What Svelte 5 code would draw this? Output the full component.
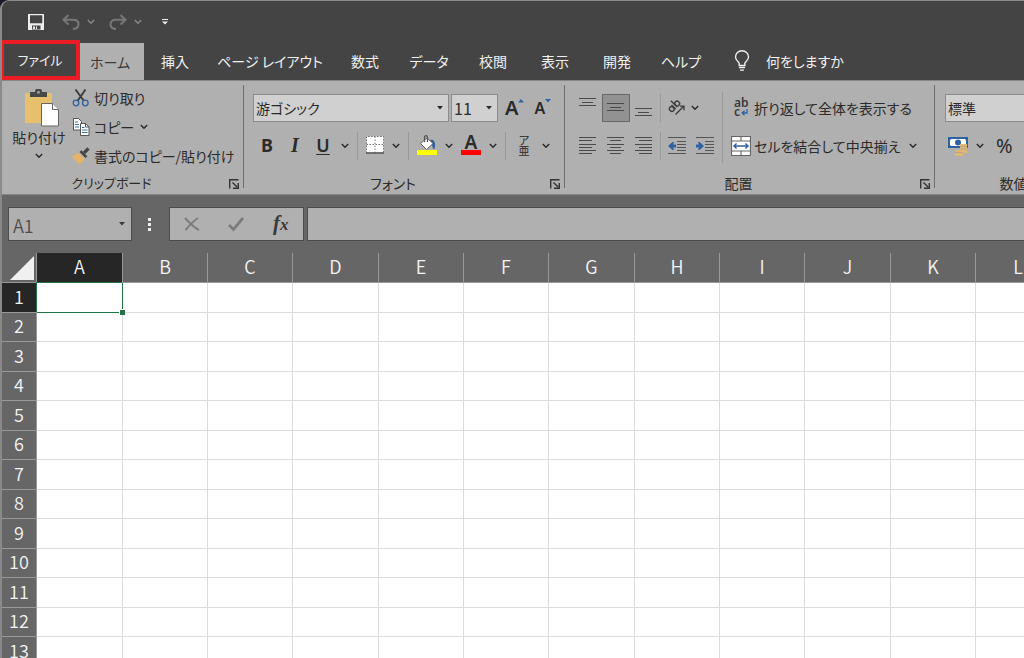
<script>
  const tabs = [
    { label: '挿入' },
    { label: 'ページ レイアウト', size: 'wide' },
    { label: '数式' },
    { label: 'データ', size: 'mid' },
    { label: '校閲' },
    { label: '表示' },
    { label: '開発' },
    { label: 'ヘルプ', size: 'mid' },
  ];
  const columns = 'ABCDEFGHIJKL'.split('');
  const rows = Array.from({ length: 13 }, (_, i) => i + 1);

  let active = $state({ column: 'A', row: 1 });
  let formula = $state('');
</script>

{#snippet chevron()}
  <svg class="chevron" viewBox="0 0 8 6" width="8" height="6" aria-hidden="true">
    <path d="M.8 1 4 4.200 7.200 1" fill="none" stroke="currentColor" stroke-width="1.500" />
  </svg>
{/snippet}

{#snippet caret()}
  <svg class="caret" viewBox="0 0 6 4" width="6" height="4" aria-hidden="true">
    <path d="M0 0h6L3 3.6z" fill="currentColor" />
  </svg>
{/snippet}

{#snippet launcher(label)}
  <button class="launcher" aria-label={label}>
    <svg viewBox="0 0 10 10" width="10" height="10" aria-hidden="true">
      <path d="M.7 9.5V.7H9.5M3.5 3.5l4.6 4.6M9.3 4v5.3H4" fill="none" stroke="#333" stroke-width="1.4" />
    </svg>
  </button>
{/snippet}

{#snippet lines(list)}
  <svg viewBox="0 0 18 20" width="18" height="20" aria-hidden="true">
    {#each list as [x, y, w]}
      <rect {x} {y} width={w} height="1" fill="#4a4a4a" />
    {/each}
  </svg>
{/snippet}

<div class="window">
  <header class="title">
    <button aria-label="上書き保存">
      <svg viewBox="0 0 16 16" width="16" height="16" aria-hidden="true">
        <path d="M0 0h16v16H0z" fill="#eee" />
        <path d="M2 1.300h12.300v7.900H2zM4 11.500h8.500v4H4z" fill="#444" />
        <path d="M5 12.500h2v2.500H5zM8 12.500h1v2.500H8z" fill="#eee" />
      </svg>
    </button>
    <button class="dim undo" aria-label="元に戻す">
      <svg viewBox="0 0 18 16" width="18" height="16" aria-hidden="true">
        <path d="M6.5 1 1.5 5.8l5 4.6M1.8 5.8H11c3.500 0 5.500 1.800 5.500 4.400 0 2.800-2.200 4.700-5.500 4.700" fill="none" stroke="currentColor" stroke-width="2.100" />
      </svg>
      {@render chevron()}
    </button>
    <button class="dim redo" aria-label="やり直し">
      <svg viewBox="0 0 18 16" width="18" height="16" aria-hidden="true">
        <path d="M11.500 1l5 4.800-5 4.600M16.200 5.800H7C3.500 5.800 1.500 7.600 1.500 10.200c0 2.800 2.200 4.700 5.500 4.700" fill="none" stroke="currentColor" stroke-width="2.100" />
      </svg>
      {@render chevron()}
    </button>
    <button class="customize" aria-label="クイック アクセス ツール バーのカスタマイズ">
      <svg viewBox="0 0 6 6" width="6" height="6" aria-hidden="true">
        <path d="M0 0h6v1H0zM0 2.400h6L3 5.600z" fill="#eee" />
      </svg>
    </button>
  </header>

  <nav class="tabs">
    <button class="tab file">ファイル</button>
    <button class="tab home">ホーム</button>
    {#each tabs as tab}
      <button class="tab {tab.size ?? ''}">{tab.label}</button>
    {/each}
    <button class="tab tell">
      <svg viewBox="0 0 16 22" width="16" height="22" aria-hidden="true">
        <path d="M5.200 15.500v-2.300C4.800 11.500 1.500 10.500 1.500 7a6.500 6.200 0 0 1 13 0c0 3.500-3.300 4.500-3.700 6.200v2.300z" fill="none" stroke="#eee" stroke-width="1.400" />
        <path d="M5 17.500h6M6 20.200h4" stroke="#eee" stroke-width="1.300" />
      </svg>
      何をしますか
    </button>
  </nav>

  <div class="ribbon">
    <section class="group clipboard" aria-label="クリップボード">
      <div class="body">
        <button class="paste">
          <svg viewBox="0 0 36 38" width="36" height="38" aria-hidden="true">
            <path d="M1 4h27v30H1z" fill="#e6c06c" />
            <path d="M6 3h5V2a2 2 0 0 1 2-2h3a2 2 0 0 1 2 2v1h5v5H6z" fill="#484848" />
            <path d="M13.300 2.200h2.400v2.200h-2.400z" fill="#b0b0b0" />
            <path d="M17.500 14.500h11l6 6v16.500h-17z" fill="#fff" stroke="#666" />
            <path d="M28.500 14.500v6h6" fill="#fff" stroke="#666" />
          </svg>
          <span>貼り付け</span>
          {@render chevron()}
        </button>
        <div class="small">
          <button>
            <svg viewBox="0 0 18 18" width="18" height="18" aria-hidden="true">
              <path d="M3.500.5 12 12M13.500.5 5.500 12" stroke="#3c3c3c" stroke-width="1.900" />
              <circle cx="4" cy="14" r="2.800" fill="none" stroke="#2f62a0" stroke-width="1.300" />
              <circle cx="13.300" cy="14" r="2.800" fill="none" stroke="#2f62a0" stroke-width="1.300" />
            </svg>
            切り取り
          </button>
          <button>
            <svg viewBox="0 0 18 18" width="18" height="18" aria-hidden="true">
              <path d="M1.500.5h5l3 3v8.500h-8z" fill="#fff" stroke="#555" />
              <path d="M3 4h3M3 6.500h4M3 9h4" stroke="#3c6ea8" />
              <path d="M8.500 5.500h5l3.500 3.500v8.500H8.500z" fill="#fff" stroke="#555" />
              <path d="M13.500 5.500V9H17" fill="none" stroke="#555" />
              <path d="M10 9.500h2.500M10 12h5.500M10 14.500h5.500" stroke="#3c6ea8" />
            </svg>
            コピー
            {@render chevron()}
          </button>
          <button>
            <svg viewBox="0 0 18 18" width="18" height="18" aria-hidden="true">
              <path d="M0 9.500 6.500 6l6 6L8 17.500 6 16z" fill="#e6b467" />
              <path d="m7.500 5 1.800-1.800 6 6-1.800 1.800z" fill="#444" />
              <path d="m12 5.800 4.500-4.300" stroke="#444" stroke-width="3.200" />
            </svg>
            書式のコピー/貼り付け
          </button>
        </div>
      </div>
      <footer><span>クリップボード</span>{@render launcher('クリップボードの詳細')}</footer>
    </section>

    <section class="group font" aria-label="フォント">
      <div class="body stack">
        <div class="line">
          <label class="pick face">
            <select aria-label="フォント名"><option>游ゴシック</option></select>
            {@render caret()}
          </label>
          <label class="pick size">
            <select aria-label="フォント サイズ"><option>11</option></select>
            {@render caret()}
          </label>
          <button class="grow big" aria-label="フォント サイズの拡大">
            <b>A</b>
            <svg viewBox="0 0 6 4" width="6" height="4" aria-hidden="true"><path d="M0 3.500 3 0l3 3.500z" fill="#2f62a0" /></svg>
          </button>
          <button class="grow" aria-label="フォント サイズの縮小">
            <b>A</b>
            <svg viewBox="0 0 6 4" width="6" height="4" aria-hidden="true"><path d="M0 0h6L3 3.500z" fill="#2f62a0" /></svg>
          </button>
        </div>
        <div class="line tools">
          <button class="letter bold" aria-label="太字">B</button>
          <button class="letter italic" aria-label="斜体">I</button>
          <button class="letter under" aria-label="下線">U</button>
          <button class="drop" aria-label="下線の種類">{@render chevron()}</button>
          <i class="rule"></i>
          <button class="tool border" aria-label="罫線">
            <svg viewBox="0 0 18 18" width="18" height="18" aria-hidden="true">
              <path d="M.5.500h17v16H.500z" fill="#fff" />
              <path d="M.5 17V.500h17V17M9 .500V17M.500 8.500h17" fill="none" stroke="#777" stroke-dasharray="1.500 1.500" />
              <path d="M0 17h18" stroke="#555" stroke-width="1.400" />
            </svg>
          </button>
          <button class="drop" aria-label="罫線の種類">{@render chevron()}</button>
          <i class="rule"></i>
          <button class="tool" aria-label="塗りつぶしの色">
            <svg viewBox="0 0 20 20" width="20" height="20" aria-hidden="true">
              <path d="M13 4.500c4.500 0 6 3 4.500 9.500-2.500-.500-2-4-3-6z" fill="#2f62a0" />
              <path d="M3.500 8.500 10 3l6 5.500-6.500 6z" fill="#fff" stroke="#666" />
              <path d="M7.500 7V2.500c0-2.500 3-2.500 3 0V7" fill="none" stroke="#555" stroke-width="1.300" />
              <path d="M0 15h20v5H0z" fill="#ff0" />
            </svg>
          </button>
          <button class="drop" aria-label="塗りつぶしの色の一覧">{@render chevron()}</button>
          <button class="tool color" aria-label="フォントの色">
            <b>A</b><span></span>
          </button>
          <button class="drop" aria-label="フォントの色の一覧">{@render chevron()}</button>
          <i class="rule"></i>
          <button class="tool ruby" aria-label="ふりがなの表示"><span>ア</span><span>亜</span></button>
          <button class="drop" aria-label="ふりがなの設定">{@render chevron()}</button>
        </div>
      </div>
      <footer><span>フォント</span>{@render launcher('フォントの設定')}</footer>
    </section>

    <section class="group align" aria-label="配置">
      <div class="body split">
        <div class="stack">
          <div class="line">
            <button class="cell" aria-label="上揃え">{@render lines([[0, 0, 17], [3, 4, 11], [0, 7, 17]])}</button>
            <button class="cell on" aria-label="上下中央揃え">{@render lines([[0, 5, 17], [3, 9, 11], [0, 12, 17]])}</button>
            <button class="cell" aria-label="下揃え">{@render lines([[0, 10, 17], [3, 14, 11], [0, 17, 17]])}</button>
            <i class="rule"></i>
            <button class="turn" aria-label="方向">
              <svg viewBox="0 0 18 18" width="18" height="18" aria-hidden="true">
                <g fill="none" stroke="#3a3a3a" stroke-width="1.300">
                  <g transform="rotate(-45 6 7)">
                    <ellipse cx="2.300" cy="7.500" rx="2.200" ry="2.500" />
                    <path d="M5 4.500v5.800M7.500 1v9" />
                    <ellipse cx="10" cy="7.500" rx="2.300" ry="2.500" />
                  </g>
                  <path d="M7.500 15.500 15.500 7.500M12 7.200h4v4" />
                </g>
              </svg>
              {@render chevron()}
            </button>
          </div>
          <div class="line">
            <button class="cell" aria-label="左揃え">{@render lines([[0, 1, 17], [0, 4, 13], [0, 8, 17], [0, 11, 13], [0, 14, 17], [0, 17, 13]])}</button>
            <button class="cell" aria-label="中央揃え">{@render lines([[0, 1, 17], [3, 4, 11], [0, 8, 17], [3, 11, 11], [0, 14, 17], [3, 17, 11]])}</button>
            <button class="cell" aria-label="右揃え">{@render lines([[0, 1, 17], [4, 4, 13], [0, 8, 17], [4, 11, 13], [0, 14, 17], [4, 17, 13]])}</button>
            <i class="rule"></i>
            <button class="cell" aria-label="インデントを減らす">
              <svg viewBox="0 0 18 20" width="18" height="20" aria-hidden="true">
                <path d="M0 1.500h18M9 5.500h9M9 8.500h9M9 11.500h9M9 14.500h9M0 17.500h18" stroke="#555" />
                <path d="M0 10l4.500-4h1.500L5.200 8.600H8v2.800H5.200l.8 2.600H4.500z" fill="#2f62a0" />
              </svg>
            </button>
            <button class="cell" aria-label="インデントを増やす">
              <svg viewBox="0 0 18 20" width="18" height="20" aria-hidden="true">
                <path d="M0 1.500h18M9 5.500h9M9 8.500h9M9 11.500h9M9 14.500h9M0 17.500h18" stroke="#555" />
                <path d="M8 10 3.500 6H2l.8 2.600H0v2.800h2.800L2 14h1.500z" fill="#2f62a0" />
              </svg>
            </button>
          </div>
        </div>
        <i class="rule tall"></i>
        <div class="stack wrap">
          <div class="line">
            <button class="text">
              <svg viewBox="0 0 20 20" width="20" height="20" aria-hidden="true">
                <text x="3" y="9" font-size="12" font-weight="600" fill="#3a3a3a">ab</text>
                <text x="3" y="18" font-size="12" font-weight="600" fill="#3a3a3a">c</text>
                <path d="M16 11v4H11.500M13.500 12.800 11.200 15l2.300 2.200" fill="none" stroke="#2f62a0" stroke-width="1.300" />
              </svg>
              折り返して全体を表示する
            </button>
          </div>
          <div class="line">
            <button class="text">
              <svg viewBox="0 0 18 18" width="20" height="20" aria-hidden="true">
                <path d="M.5.500h17v17H.500z" fill="#fff" stroke="#666" />
                <path d="M.5 4.500h17M.500 13.500h17M9 .500v4M9 13.500v4" stroke="#666" />
                <path d="M3 9h12M5 6.800 2.700 9 5 11.200M13 6.800 15.300 9 13 11.200" fill="none" stroke="#2f62a0" stroke-width="1.300" />
              </svg>
              セルを結合して中央揃え
              {@render chevron()}
            </button>
          </div>
        </div>
      </div>
      <footer><span>配置</span>{@render launcher('配置の設定')}</footer>
    </section>

    <section class="group number" aria-label="数値">
      <div class="body stack">
        <div class="line">
          <label class="pick format"><select aria-label="表示形式"><option>標準</option></select></label>
        </div>
        <div class="line money">
          <button class="turn" aria-label="通貨表示形式">
            <svg viewBox="0 0 20 20" width="20" height="20" aria-hidden="true">
              <path d="M0 1h20v11H0z" fill="#2f62a0" />
              <path d="M3 3h14l1 1.500v4L17 10H3L2 8.500v-4z" fill="#fff" />
              <circle cx="10" cy="6.500" r="3" fill="#2f62a0" />
              <path d="M12 8h7v9h-4v3H7v-6h5z" fill="#e0b878" />
              <path d="M12 10.500h7M12 13h7M7 16.500h8" stroke="#b9a382" />
            </svg>
            {@render chevron()}
          </button>
          <button class="percent" aria-label="パーセント スタイル">%</button>
        </div>
      </div>
      <footer><span>数値</span></footer>
    </section>
  </div>

  <div class="formula">
    <label class="name">
      <input aria-label="名前ボックス" value={active.column + active.row} readonly />
      {@render caret()}
    </label>
    <svg class="dots" viewBox="0 0 3 13" width="3" height="13" aria-hidden="true">
      <path d="M0 0h3v3H0zM0 5h3v3H0zM0 10h3v3H0z" fill="#eee" />
    </svg>
    <div class="edit">
      <button aria-label="キャンセル">
        <svg viewBox="0 0 16 14" width="16" height="14" aria-hidden="true"><path d="M1 1c4 4 8 9 14 12M14 1C9 4 5 9 1.500 13" fill="none" stroke="#7c7c7c" stroke-width="2" /></svg>
      </button>
      <button aria-label="入力">
        <svg viewBox="0 0 16 14" width="16" height="14" aria-hidden="true"><path d="M1 8l4.500 4.500L15 1" fill="none" stroke="#7c7c7c" stroke-width="2.800" /></svg>
      </button>
      <button class="fx" aria-label="関数の挿入">f<small>x</small></button>
    </div>
    <input class="entry" aria-label="数式バー" bind:value={formula} />
  </div>

  <div class="sheet">
    <table>
      <thead>
        <tr>
          <th class="corner" aria-label="すべて選択">
            <svg viewBox="0 0 24 24" width="24" height="24" aria-hidden="true"><path d="M24 0v24H0z" fill="#f0f0f0" /></svg>
          </th>
          {#each columns as column}
            <th scope="col" class:current={column === active.column}>{column}</th>
          {/each}
        </tr>
      </thead>
      <tbody>
        {#each rows as row}
          <tr>
            <th scope="row" class:current={row === active.row}>{row}</th>
            {#each columns as column}
              <td
                class:selected={column === active.column && row === active.row}
                onclick={() => (active = { column, row })}
              ></td>
            {/each}
          </tr>
        {/each}
      </tbody>
    </table>
  </div>
</div>

<style>
  :global(body) {
    margin: 0;
    background: #1c1a26;
  }
  .window {
    display: flex;
    flex-direction: column;
    height: 100vh;
    box-sizing: border-box;
    border-top: 1px solid #8a8a8a;
    border-left: 2px solid #8a8a8a;
    border-top-left-radius: 9px;
    background: #444;
    color: #2b2b2b;
    font: 14px/20px 'Noto Sans CJK JP', sans-serif;
    font-feature-settings: 'palt';
    overflow: hidden;
    overflow: clip;
  }
  button,
  select,
  input {
    margin: 0;
    padding: 0;
    border: 0;
    border-radius: 0;
    background: none;
    color: inherit;
    font: inherit;
    font-feature-settings: inherit;
    appearance: none;
  }
  button {
    display: flex;
    align-items: center;
    justify-content: center;
    white-space: nowrap;
  }
  svg {
    display: block;
    flex: none;
    overflow: visible;
  }

  .title {
    display: flex;
    align-items: center;
    height: 41px;
    padding-left: 26px;
  }
  .dim {
    color: #777;
    gap: 7px;
  }
  .undo {
    margin-left: 18px;
  }
  .redo {
    margin-left: 14px;
  }
  .title .chevron {
    color: #888;
  }
  .customize {
    margin-left: 20px;
  }

  .tabs {
    display: flex;
    height: 38px;
    color: #f0f0f0;
  }
  .tab {
    flex: none;
    width: 62px;
  }
  .tab.mid {
    width: 66px;
  }
  .tab.wide {
    width: 128px;
  }
  .tab.file {
    width: 80px;
    margin: -2px 0 0 -2px;
    border: 4px solid #ec1c24;
    font-size: 13px;
  }
  .tab.home {
    width: 64px;
    margin-top: 1px;
    padding-right: 4px;
    background: #b0b0b0;
    color: #3a3a3a;
  }
  .tab.tell {
    width: auto;
    gap: 16px;
    margin-left: 20px;
  }

  .ribbon {
    display: flex;
    flex: none;
    height: 113px;
    border-top: 1px solid #858585;
    border-bottom: 1px solid #858585;
    background: #b0b0b0;
  }
  .group {
    display: flex;
    flex-direction: column;
    flex: none;
    position: relative;
  }
  .group:not(:last-child)::after {
    content: '';
    position: absolute;
    right: 0;
    top: 4px;
    bottom: 6px;
    width: 1px;
    background: #6e6e6e;
  }
  .clipboard {
    width: 242px;
  }
  .font {
    width: 321px;
  }
  .align {
    width: 370px;
  }
  .number {
    width: 150px;
  }
  .body {
    display: flex;
    flex: 1;
  }
  .group footer {
    display: flex;
    align-items: center;
    height: 20px;
    padding-right: 5px;
  }
  .group footer span {
    flex: 1;
    padding: 0 8px 2px 0;
    text-align: center;
  }
  .clipboard footer {
    font-size: 13px;
  }
  .number footer {
    padding-left: 20px;
  }

  .paste {
    flex-direction: column;
    justify-content: flex-start;
    width: 74px;
    padding-top: 8px;
  }
  .paste svg:first-child {
    margin-left: 6px;
  }
  .paste .chevron {
    margin-top: 6px;
  }
  .small {
    display: flex;
    flex-direction: column;
    gap: 9px;
    padding-top: 7px;
    margin-left: -4px;
  }
  .small button {
    justify-content: flex-start;
    gap: 4px;
  }
  .small .chevron {
    margin-left: 2px;
  }

  .stack {
    display: flex;
    flex-direction: column;
    gap: 10px;
    padding-top: 13px;
  }
  .line {
    display: flex;
    align-items: center;
    height: 28px;
  }
  .font .stack {
    padding-left: 9px;
  }
  .pick {
    display: grid;
    align-items: center;
    height: 26px;
    border: 1px solid #8c8c8c;
    background: #d0d0d0;
  }
  .pick select,
  .pick .caret {
    grid-area: 1 / 1;
  }
  .pick select {
    width: 100%;
    padding-left: 2px;
  }
  .pick .caret {
    justify-self: end;
    margin-right: 5px;
    pointer-events: none;
  }
  .face {
    width: 194px;
  }
  .size {
    width: 45px;
    margin: 0 7px 0 2px;
    font-size: 16px;
  }
  .grow {
    align-items: flex-start;
    width: 28px;
    font: 16px/22px 'Noto Sans', sans-serif;
  }
  .grow b {
    font-weight: 600;
  }
  .grow svg {
    margin-top: 2px;
  }
  .grow.big {
    justify-content: flex-start;
    width: 24px;
    font-size: 20px;
  }
  .tools .letter {
    width: 28px;
    font: bold 18px/24px 'Noto Sans', sans-serif;
    padding-bottom: 2px;
  }
  .tools .italic {
    font: italic bold 20px/24px 'Liberation Serif', serif;
  }
  .tools .under {
    text-decoration: underline;
    text-underline-offset: 2px;
    text-decoration-thickness: 1px;
    font-weight: 600;
  }
  .drop {
    width: 16px;
    height: 24px;
  }
  .tool {
    width: 28px;
    height: 24px;
    padding-bottom: 3px;
  }
  .tool.border {
    width: 26px;
  }
  .rule {
    flex: none;
    align-self: stretch;
    width: 1px;
    margin: 0 4px;
    background: #989898;
  }
  .color {
    flex-direction: column;
    font: 19px/16px 'Noto Sans', sans-serif;
  }
  .color b {
    font-weight: 600;
  }
  .color span {
    width: 20px;
    height: 5px;
    background: #f00;
  }
  .ruby {
    flex-direction: column;
    font-size: 11px;
    line-height: 10px;
  }

  .align .split {
    padding-left: 9px;
  }
  .align .line .rule {
    margin: 0 2px;
  }
  .cell {
    width: 28px;
    height: 28px;
    box-sizing: border-box;
  }
  .cell.on {
    border: 1px solid #686868;
    background: #929292;
  }
  .turn {
    gap: 8px;
  }
  .align .turn {
    padding-left: 5px;
    gap: 5px;
  }
  .rule.tall {
    margin: 11px 8px 11px 3px;
  }
  .text {
    gap: 3px;
  }
  .text .chevron {
    margin-left: 6px;
  }
  .text text {
    font-family: 'Noto Sans', sans-serif;
  }

  .number .stack {
    padding-left: 10px;
  }
  .format {
    width: 134px;
  }
  .money {
    gap: 12px;
    padding-left: 3px;
  }
  .percent {
    font: 20px/24px 'Noto Sans', sans-serif;
  }

  .formula {
    display: flex;
    flex: none;
    align-items: center;
    height: 34px;
    padding: 12px 0 12px 6px;
    background: #666;
  }
  .name,
  .edit,
  .entry {
    box-sizing: border-box;
    height: 34px;
    border: 1px solid #4c4c4c;
    background: #b0b0b0;
  }
  .name {
    display: flex;
    align-items: center;
    width: 124px;
    padding: 0 6px 0 4px;
    color: #3a3a3a;
  }
  .name input {
    flex: 1;
    width: 60px;
    padding-top: 2px;
    color: #4c4c4c;
    font-size: 18px;
    font-weight: 350;
  }
  .dots {
    margin: 0 18px 0 16px;
  }
  .edit {
    display: flex;
    width: 135px;
  }
  .edit button {
    flex: 1;
  }
  .edit .fx {
    align-items: baseline;
    font: italic bold 21px/30px 'Liberation Serif', serif;
    color: #3a3a3a;
  }
  .fx small {
    font-size: 17px;
  }
  .entry {
    flex: 1;
    min-width: 0;
    margin-left: 3px;
    padding: 0 8px;
    border-right: 0;
  }

  .sheet {
    flex: 1;
    min-height: 0;
    overflow: hidden;
    background: #fff;
  }
  table {
    border-collapse: separate;
    border-spacing: 0;
    table-layout: fixed;
    width: max-content;
    font-size: 18px;
    line-height: 22px;
  }
  th,
  td {
    box-sizing: border-box;
    padding: 0;
  }
  th {
    padding-bottom: 4px;
    background: #666;
    color: #f4f4f4;
    font-weight: 350;
    border-right: 1px solid #999;
    border-bottom: 1px solid #999;
  }
  thead th {
    width: 85px;
    height: 30px;
  }
  thead th:nth-child(3n + 2) {
    width: 86px;
  }
  thead .corner {
    width: 35px;
    padding: 0;
    vertical-align: bottom;
  }
  .corner svg {
    margin: 0 0 2px 8px;
  }
  tbody tr {
    height: 29px;
  }
  tbody tr:nth-child(odd) {
    height: 30px;
  }
  td {
    position: relative;
    border-right: 1px solid #dcdcdc;
    border-bottom: 1px solid #dcdcdc;
  }
  th.current {
    background: #262626;
  }
  td.selected {
    z-index: 1;
    border-color: #217346;
    box-shadow: -1px -1px 0 #217346;
  }
  td.selected::after {
    content: '';
    position: absolute;
    right: -3px;
    bottom: -3px;
    width: 5px;
    height: 5px;
    border: 1px solid #fff;
    border-width: 1px 0 0 1px;
    background: #217346;
  }
</style>
